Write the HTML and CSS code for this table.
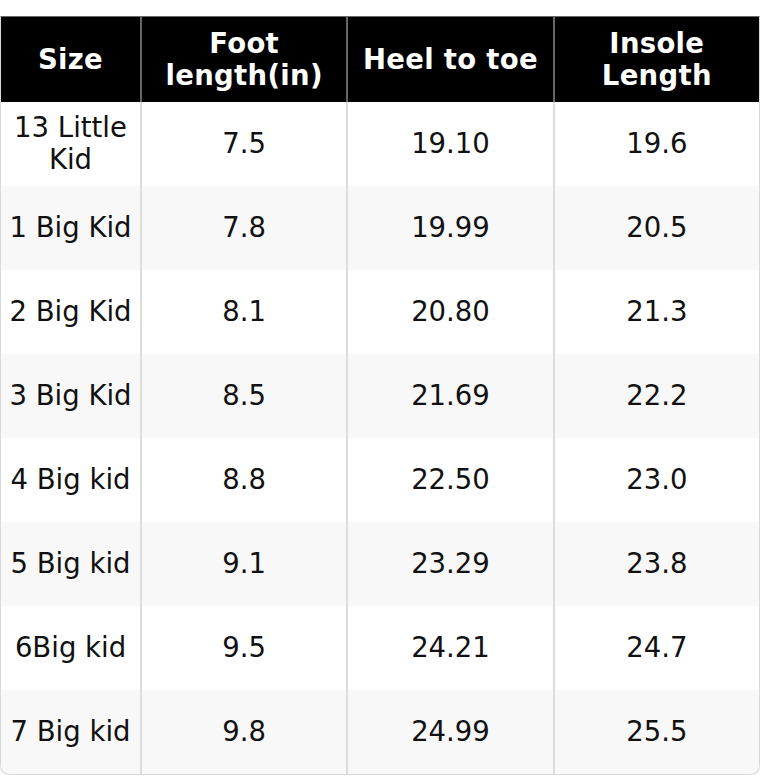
FILE: index.html
```html
<!DOCTYPE html>
<html>
<head>
<meta charset="utf-8">
<link rel="stylesheet" href="styles.css">
</head>
<body>
<div class="wrap">
<table class="sizes">
<thead>
<tr><th class="c1">Size</th><th>Foot<br>length(in)</th><th>Heel to toe</th><th>Insole<br>Length</th></tr>
</thead>
<tbody>
<tr><td>13 Little<br>Kid</td><td>7.5</td><td>19.10</td><td>19.6</td></tr>
<tr><td>1 Big Kid</td><td>7.8</td><td>19.99</td><td>20.5</td></tr>
<tr><td>2 Big Kid</td><td>8.1</td><td>20.80</td><td>21.3</td></tr>
<tr><td>3 Big Kid</td><td>8.5</td><td>21.69</td><td>22.2</td></tr>
<tr><td>4 Big kid</td><td>8.8</td><td>22.50</td><td>23.0</td></tr>
<tr><td>5 Big kid</td><td>9.1</td><td>23.29</td><td>23.8</td></tr>
<tr><td>6Big kid</td><td>9.5</td><td>24.21</td><td>24.7</td></tr>
<tr><td>7 Big kid</td><td>9.8</td><td>24.99</td><td>25.5</td></tr>
</tbody>
</table>
</div>
</body>
</html>
```
FILE: styles.css
```css
html, body { margin: 0; padding: 0; background: #fff; }
body { font-family: "DejaVu Sans", sans-serif; }
.wrap { padding-top: 16px; width: 760px; }
.sizes {
  width: 760px;
  border-collapse: separate;
  border-spacing: 0;
  border: 1px solid #d8d8d8;
  border-top-color: #666;
  border-radius: 0 0 10px 10px;
  overflow: hidden;
  box-shadow: 0 1px 2px rgba(0,0,0,0.12);
  table-layout: fixed;
  font-size: 27.5px;
  line-height: 32px;
  color: #111;
}
.sizes th {
  background: #000;
  color: #fff;
  font-weight: bold;
  height: 85px;
  padding: 0 4px 1px;
  text-align: center;
  vertical-align: middle;
  border-left: 2px solid #666;
  box-sizing: border-box;
  letter-spacing: 0.3px;
}
.sizes th:first-child { border-left: none; width: 139px; }
.sizes td {
  height: 84px;
  padding: 0 4px 2px;
  text-align: center;
  vertical-align: middle;
  border-left: 2px solid #dcdcdc;
  box-sizing: border-box;
}
.sizes td:first-child { border-left: none; }
.sizes tbody tr:nth-child(even) td { background: #f8f8f8; }
```
